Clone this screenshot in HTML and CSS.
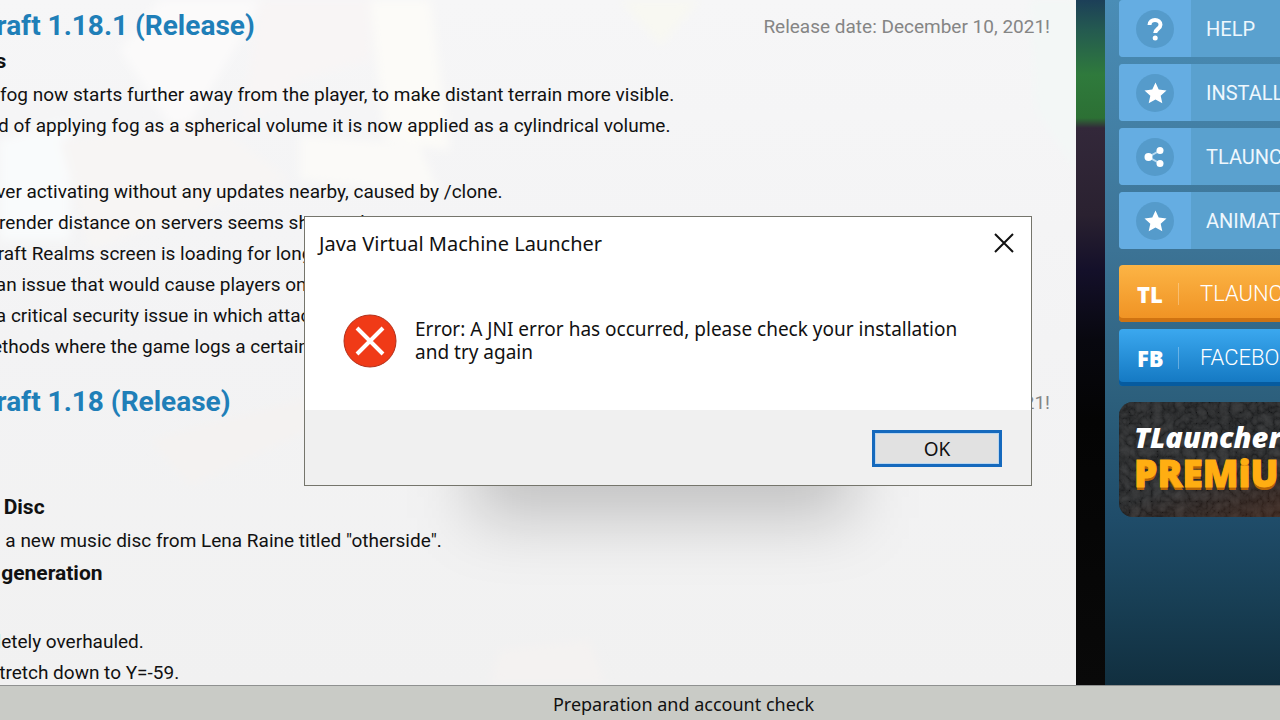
FILE: index.html
```html
<!DOCTYPE html>
<html lang="en">
<head>
  <meta charset="UTF-8" />
  <meta name="viewport" content="width=device-width, initial-scale=1.0" />
  <title>TLauncher</title>
  <link rel="stylesheet" href="styles.css">
</head>
<body>

<div class="launcher">
  <main class="news">
    <!-- Faded artwork behind the changelog -->
    <svg class="news-art" viewBox="0 0 1076 685" preserveAspectRatio="none" aria-hidden="true">
      <defs>
        <filter id="soft"><feGaussianBlur stdDeviation="5" /></filter>
        <linearGradient id="fade" x1="0" y1="0" x2="0" y2="1">
          <stop offset="0" stop-color="#f6f6f7" />
          <stop offset="0.5" stop-color="#f3f3f4" />
          <stop offset="1" stop-color="#f1f1f1" />
        </linearGradient>
      </defs>
      <rect width="1076" height="685" fill="url(#fade)" />
      <g filter="url(#soft)">
        <path d="M160 0h100l-20 40-60 100-60-90z" fill="#fbfafa" />
        <path d="M0 140l70-20v120H0z" fill="#f9fbfc" />
        <path d="M260 0h110v60l-70 20-60 50z" fill="#f8f5f5" />
        <path d="M370 0h60l20 150-65-10z" fill="#fcfbf8" />
        <path d="M300 135l120 10 20 50-140-15z" fill="#fbfaf8" />
        <path d="M620 0h80l-40 45z" fill="#f8f8f2" />
        <path d="M60 140l150-20 80 60-200 70z" fill="#f7f5f4" />
        <path d="M1030 0h46v170l-40-60z" fill="#f3f7f6" />
        <path d="M150 440l170-45 20 20-150 70z" fill="#f4f2f1" />
        <path d="M500 650l90-10 15 45H490z" fill="#f4f2f1" />
      </g>
    </svg>

    <article class="release">
      <div class="release-head">
        <h2>Minecraft 1.18.1 (Release)</h2>
        <span class="date">Release date: December 10, 2021!</span>
      </div>
      <h3>Details</h3>
      <ul>
        <li>World fog now starts further away from the player, to make distant terrain more visible.</li>
        <li>Instead of applying fog as a spherical volume it is now applied as a cylindrical volume.</li>
      </ul>
      <h3>Fixes</h3>
      <ul>
        <li>Observer activating without any updates nearby, caused by /clone.</li>
        <li>Client render distance on servers seems shorter than in 1.17.1.</li>
        <li>Minecraft Realms screen is loading for longer</li>
        <li>Fixed an issue that would cause players on</li>
        <li>Fixed a critical security issue in which attackers</li>
        <li>Fix methods where the game logs a certain</li>
      </ul>
    </article>

    <article class="release">
      <div class="release-head">
        <h2>Minecraft 1.18 (Release)</h2>
        <span class="date">Release date: November 30, 2021!</span>
      </div>
      <h3 class="group">New</h3>
      <h3>Music Disc</h3>
      <ul>
        <li>Added a new music disc from Lena Raine titled "otherside".</li>
      </ul>
      <h3>World generation</h3>
      <h3>New</h3>
      <ul>
        <li>Completely overhauled.</li>
        <li>Now stretch down to Y=-59.</li>
      </ul>
    </article>
  </main>

  <aside class="sidebar">
    <nav class="menu">
      <a href="#" class="menu-item">
        <span class="menu-icon">
          <svg viewBox="0 0 38 38" aria-hidden="true">
            <circle cx="19" cy="19" r="19" />
            <path class="line" d="M13.500 15c0-3.500 2.500-5 5.500-5s5.500 1.800 5.500 4.800c0 4-5.300 4.200-5.300 8.200" />
            <circle class="solid" cx="19.200" cy="28" r="2.500" />
          </svg>
        </span>
        <span class="menu-text">HELP</span>
      </a>
      <a href="#" class="menu-item">
        <span class="menu-icon">
          <svg viewBox="0 0 38 38" aria-hidden="true">
            <circle cx="19" cy="19" r="19" />
            <path class="solid" d="M19.500 8.500l3.200 7.100 7.800.9-5.800 5.200 1.600 7.600-6.800-3.800-6.800 3.800 1.600-7.600-5.800-5.200 7.800-.9z" />
          </svg>
        </span>
        <span class="menu-text">INSTALL</span>
      </a>
      <a href="#" class="menu-item">
        <span class="menu-icon">
          <svg viewBox="0 0 38 38" aria-hidden="true">
            <circle cx="19" cy="19" r="19" />
            <path class="link" d="M24 12.500L12.500 19 24 25.500" />
            <circle class="solid" cx="12.500" cy="19" r="4" />
            <circle class="solid" cx="24" cy="12.500" r="3.500" />
            <circle class="solid" cx="24" cy="25.500" r="3.500" />
          </svg>
        </span>
        <span class="menu-text">TLAUNCHER</span>
      </a>
      <a href="#" class="menu-item">
        <span class="menu-icon">
          <svg viewBox="0 0 38 38" aria-hidden="true">
            <circle cx="19" cy="19" r="19" />
            <path class="solid" d="M19.500 8.500l3.200 7.100 7.800.9-5.800 5.200 1.600 7.600-6.800-3.800-6.800 3.800 1.600-7.600-5.800-5.200 7.800-.9z" />
          </svg>
        </span>
        <span class="menu-text">ANIMATED</span>
      </a>
    </nav>

    <div class="social">
      <a href="#" class="social-btn orange"><b>TL</b><span>TLAUNCHER</span></a>
      <a href="#" class="social-btn blue"><b>FB</b><span>FACEBOOK</span></a>
    </div>

    <a href="#" class="premium">
      <svg class="premium-art" aria-hidden="true">
        <defs>
          <filter id="leather" x="0" y="0" width="100%" height="100%">
            <feTurbulence type="turbulence" baseFrequency="0.09" numOctaves="3" seed="4" />
            <feColorMatrix type="matrix" values="0.5 0 0 0 0  0.5 0 0 0 0  0.5 0 0 0 0  0 0 0 0 1" />
          </filter>
        </defs>
        <rect width="100%" height="100%" filter="url(#leather)" />
      </svg>
      <span class="premium-name">TLauncher</span>
      <span class="premium-word">PREMiUM</span>
    </a>
  </aside>
</div>

<footer class="status">Preparation and account check</footer>

<!-- Error window -->
<div class="dialog" role="alertdialog" aria-labelledby="dialogTitle" aria-describedby="dialogText">
  <div class="dialog-inner">
    <div class="dialog-bar">
      <h1 id="dialogTitle">Java Virtual Machine Launcher</h1>
      <button class="close" type="button" aria-label="Close">
        <svg viewBox="0 0 20 20" aria-hidden="true"><path d="M1 1l18 18M19 1L1 19" /></svg>
      </button>
    </div>
    <div class="dialog-body">
      <svg class="error-icon" viewBox="0 0 54 54" aria-hidden="true">
        <circle cx="27" cy="27" r="26" />
        <path d="M14 14l26 26M40 14L14 40" />
      </svg>
      <p id="dialogText">Error: A JNI error has occurred, please check your installation<br>and try again</p>
    </div>
    <div class="dialog-actions">
      <button class="ok" type="button">OK</button>
    </div>
  </div>
</div>

</body>
</html>
```
FILE: styles.css
```css
* {
  margin: 0;
  padding: 0;
  box-sizing: border-box;
}

body {
  height: 100vh;
  display: flex;
  flex-direction: column;
  overflow: hidden;
  font-family: Roboto, "Liberation Sans", sans-serif;
  color: #111;
  background: #060607;
}

a {
  color: inherit;
  text-decoration: none;
}

.launcher {
  flex: 1;
  min-height: 0;
  display: flex;
  gap: 29px;
  overflow: hidden;
  background: linear-gradient(#1c3f58 0, #245a50 30px, #2f7a3c 75px, #2c7034 118px, #33283a 128px, #2a2130 215px, #14102a 270px, #08080f 340px, #040404 420px, #090909 100%);
}

/* Changelog */
.news {
  position: relative;
  flex: 1;
  min-width: 0;
  overflow: hidden;
  background: #f2f2f2;
}

.news-art {
  position: absolute;
  inset: 0;
  width: 100%;
  height: 100%;
}

.release {
  position: relative;
  margin-left: -54px;
  padding-bottom: 14px;
}

.release-head {
  display: flex;
  justify-content: space-between;
  align-items: center;
  height: 44px;
  padding: 8px 26px 0 0;
  margin-left: -27px;
}

.release-head h2 {
  font-size: 28px;
  line-height: 36px;
  font-weight: 700;
  color: #1f7fb8;
}

.date {
  font-size: 19px;
  color: #858585;
}

.release h3 {
  margin-left: -5px;
  font-size: 21px;
  line-height: 35px;
  font-weight: 700;
}

.release h3.group {
  padding-top: 35px;
}

.release ul {
  list-style: none;
}

.release li {
  font-size: 19px;
  line-height: 31px;
  white-space: nowrap;
}

/* Sidebar */
.sidebar {
  flex: 0 0 175px;
  display: flex;
  flex-direction: column;
  gap: 16px;
  padding-left: 14px;
  overflow: hidden;
  background: linear-gradient(#4a8db6 0, #3c7395 250px, #2c5f7c 400px, #1f4c69 520px, #183f55 600px, #112f3f 100%);
}

.menu,
.social {
  display: flex;
  flex-direction: column;
  gap: 7px;
  width: 260px;
}

.menu-item {
  display: flex;
  height: 57px;
  border-radius: 4px;
  overflow: hidden;
  background: #5aa1cf;
}

.menu-icon {
  display: flex;
  align-items: center;
  justify-content: center;
  width: 72px;
  background: #65ade2;
}

.menu-icon svg {
  width: 38px;
  height: 38px;
  fill: #559bcb;
}

.menu-icon .solid {
  fill: #fff;
}

.menu-icon .line {
  fill: none;
  stroke: #fff;
  stroke-width: 4;
}

.menu-icon .link {
  fill: none;
  stroke: #b9dbf2;
  stroke-width: 2;
}

.menu-text {
  padding-left: 15px;
  font-size: 20px;
  line-height: 59px;
  color: #eef7fd;
}

.social-btn {
  display: flex;
  align-items: center;
  height: 57px;
  padding-left: 18px;
  border-radius: 4px;
  color: #fff;
}

.social-btn b {
  width: 42px;
  font-family: "Open Sans", sans-serif;
  font-size: 22px;
  font-weight: 800;
  line-height: 22px;
  border-right: 1px solid rgba(255, 255, 255, 0.3);
}

.social-btn span {
  padding-left: 21px;
  font-size: 22px;
  font-weight: 300;
}

.orange {
  background: linear-gradient(#fcb445, #ef9122);
  box-shadow: inset 0 -4px #cf7312;
}

.blue {
  background: linear-gradient(#3ba8ef, #1276c0);
  box-shadow: inset 0 -4px #065b9f;
}

.premium {
  position: relative;
  display: flex;
  flex-direction: column;
  width: 260px;
  height: 115px;
  padding: 17px 0 0 15px;
  border-radius: 14px;
  overflow: hidden;
  background: #1c1d1e;
  font-family: "Open Sans", sans-serif;
  font-weight: 800;
}

.premium-art {
  position: absolute;
  inset: 0;
  width: 100%;
  height: 100%;
  opacity: 0.35;
}

.premium::before {
  content: "";
  position: absolute;
  inset: 0;
  z-index: 1;
  background: linear-gradient(160deg, rgba(30, 34, 36, 0.3) 50%, rgba(88, 36, 14, 0.6));
}

.premium-name,
.premium-word {
  position: relative;
  z-index: 2;
}

.premium-name {
  font-size: 29px;
  line-height: 36px;
  font-style: italic;
  color: #fff;
}

.premium-word {
  font-size: 37px;
  line-height: 36px;
  color: #ffae12;
  -webkit-text-stroke: 1px #ffae12;
  text-shadow: 0 3px #b56408;
}

/* Status bar */
.status {
  height: 35px;
  padding-left: 87px;
  border-top: 1px solid #8f9190;
  background: #c9cbc6;
  font-family: "Noto Sans", sans-serif;
  font-size: 18px;
  line-height: 37px;
  text-align: center;
}

/* Error window */
.dialog {
  position: absolute;
  top: 216px;
  left: 304px;
  width: 728px;
  font-family: "Noto Sans", "Open Sans", sans-serif;
}

.dialog::before {
  content: "";
  position: absolute;
  left: 170px;
  right: 180px;
  bottom: -32px;
  height: 120px;
  background: rgba(0, 0, 0, 0.2);
  filter: blur(32px);
}

.dialog-inner {
  position: relative;
  border: 1px solid #75756c;
  background: #fff;
}

.dialog-bar {
  display: flex;
  justify-content: space-between;
  align-items: center;
  height: 52px;
  padding: 0 17px 0 14px;
}

.dialog-bar h1 {
  font-size: 20px;
  font-weight: 400;
}

.close {
  width: 20px;
  height: 20px;
  border: none;
  background: none;
}

.close svg {
  display: block;
  fill: none;
  stroke: #111;
  stroke-width: 2;
}

.dialog-body {
  display: flex;
  align-items: center;
  gap: 18px;
  height: 141px;
  padding: 3px 38px 0;
}

.error-icon {
  width: 54px;
  height: 54px;
  fill: #f03a17;
  stroke: #b3301a;
  stroke-width: 1;
}

.error-icon path {
  stroke: #fff;
  stroke-width: 4;
}

.dialog-body p {
  font-size: 19px;
  line-height: 23px;
  white-space: nowrap;
}

.dialog-actions {
  display: flex;
  justify-content: flex-end;
  padding: 20px 29px 18px;
  background: #f0f0f0;
}

.ok {
  width: 130px;
  height: 37px;
  border: 3px solid #1569bd;
  background: #e1e1e1;
  box-shadow: inset 0 0 0 1px #b9d6f0;
  font-family: inherit;
  font-size: 19px;
  color: #111;
}
```
